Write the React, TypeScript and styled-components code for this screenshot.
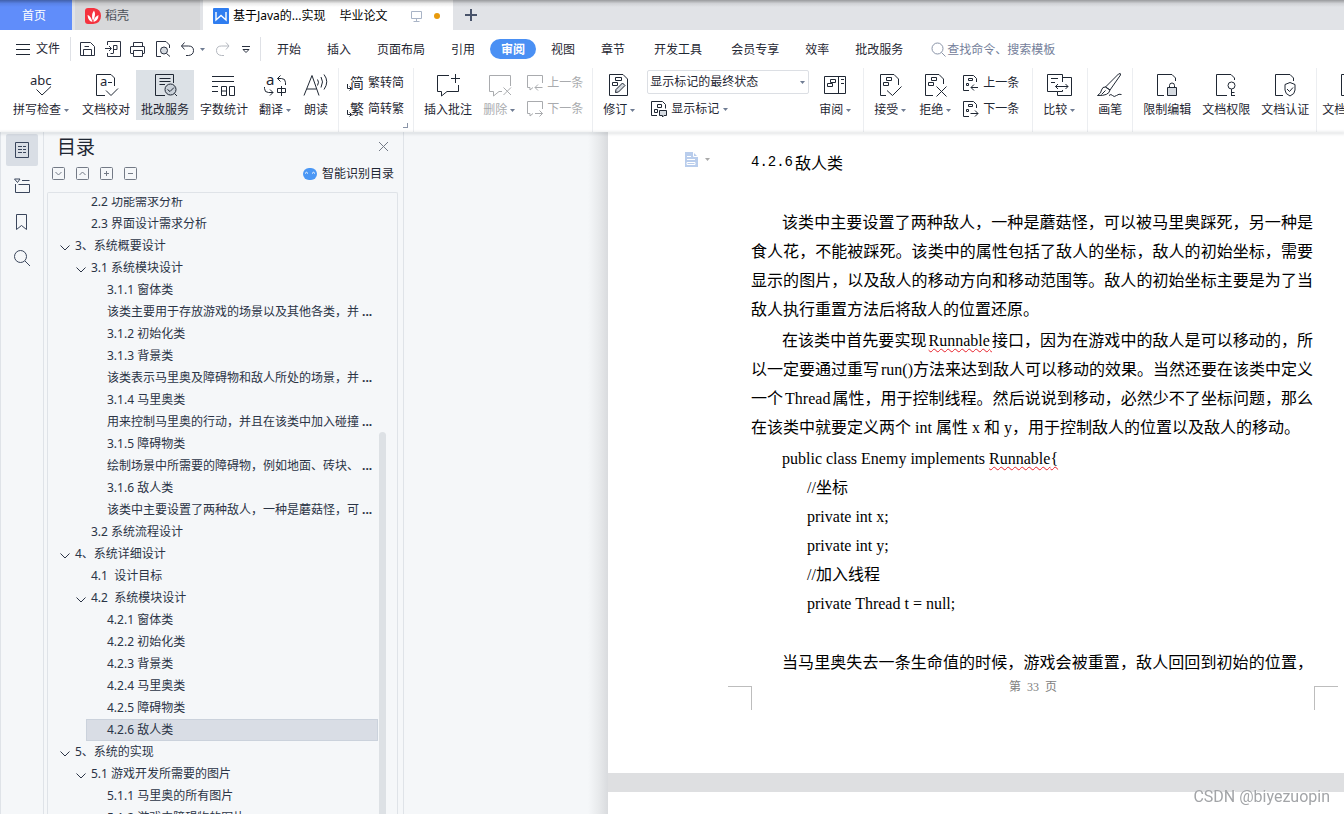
import React from "react";
import styled, { createGlobalStyle } from "styled-components";

const uiFont = `"Noto Sans", "Noto Sans CJK SC", sans-serif`;
const docFont = `"Liberation Serif", "Noto Sans CJK SC", serif`;

const GlobalStyle = createGlobalStyle`
  * { box-sizing: border-box; }
  body { margin: 0; overflow: hidden; font: 12px/18px ${uiFont}; color: #1f2733; background: #fff; }
  button, input, select { font: inherit; color: inherit; border: 0; background: none; padding: 0; margin: 0; }
  ul { list-style: none; margin: 0; padding: 0; }
  h1, h2, p { margin: 0; font-weight: 400; }
`;

const Shell = styled.div`
  display: flex;
  flex-direction: column;
  height: 100vh;
`;

/* ---------- window tabs ---------- */
const TabBar = styled.nav`
  position: relative;
  display: flex;
  height: 30px;
  flex: none;
  background: #e1e3e7;
  &::after {
    content: "";
    position: absolute;
    inset: 0 0 auto 0;
    height: 7px;
    background: linear-gradient(rgba(0, 0, 0, 0.32), rgba(0, 0, 0, 0.08) 50%, transparent);
    pointer-events: none;
  }
`;
const HomeTab = styled.button`
  width: 72px;
  margin-right: 3px;
  padding: 2px 4px 0 0;
  background: #608dfa;
  color: #fff;
`;
const FileTab = styled.button<{ $active?: boolean }>`
  display: flex;
  align-items: center;
  gap: 4px;
  width: ${(p) => (p.$active ? 250 : 128)}px;
  padding: 2px 0 0 10px;
  background: ${(p) => (p.$active ? "#fff" : "#d7d8da")};
  border-right: ${(p) => (p.$active ? 0 : 3)}px solid #e1e3e7;
  color: ${(p) => (p.$active ? "#000" : "#4b5058")};
  white-space: pre;
`;
const TabTitle = styled.span`
  display: flex;
  gap: 14px;
  margin-right: 18px;
`;
const UnsavedDot = styled.i`
  width: 6px;
  height: 6px;
  margin-left: 7px;
  border-radius: 3px;
  background: #e89a0c;
`;
const NewTab = styled.button`
  display: grid;
  place-items: center;
  width: 36px;
  color: #48536a;
`;

/* ---------- menu row ---------- */
const MenuRow = styled.div`
  display: flex;
  align-items: center;
  height: 38px;
  flex: none;
  padding: 0 0 0 16px;
`;
const FileButton = styled.button`
  display: flex;
  align-items: center;
  gap: 6px;
  width: 54px;
`;
const Rule = styled.i`
  width: 1px;
  height: 24px;
  background: #dfe1e6;
`;
const QuickBar = styled.div`
  display: flex;
  align-items: center;
  gap: 9px;
  width: 189px;
  padding-left: 9px;
`;
const QuickButton = styled.button<{ $dim?: boolean }>`
  display: flex;
  align-items: center;
  gap: 4px;
  color: ${(p) => (p.$dim ? "#b4b8bf" : "#2a3140")};
`;
const MenuTabs = styled.div`
  display: flex;
  gap: 4px;
  padding-left: 5px;
`;
const MenuTab = styled.button<{ $active?: boolean; $spaced?: boolean }>`
  height: 20px;
  padding: 2px 11px 0;
  margin-left: ${(p) => (p.$spaced ? 3 : 0)}px;
  border-radius: 10px;
  line-height: 18px;
  white-space: nowrap;
  background: ${(p) => (p.$active ? "#4a90f4" : "none")};
  color: ${(p) => (p.$active ? "#fff" : "#1f2733")};
  font-weight: ${(p) => (p.$active ? 700 : 400)};
`;
const Search = styled.label`
  display: flex;
  align-items: center;
  gap: 1px;
  margin-left: 17px;
  color: #8a94a8;
  input {
    width: 130px;
    height: 20px;
    outline: 0;
  }
  input::placeholder {
    color: #74809a;
    opacity: 1;
  }
`;

/* ---------- ribbon ---------- */
const Ribbon = styled.div`
  display: flex;
  height: 64px;
  flex: none;
  padding-left: 3px;
  overflow: hidden;
  background: #fff;
`;
const RibbonShade = styled.div`
  height: 0;
  flex: none;
  z-index: 2;
  box-shadow: 0 1px 3px 1px rgba(60, 70, 85, 0.18);
`;
const Group = styled.div<{ $tight?: boolean }>`
  position: relative;
  display: flex;
  flex: none;
  gap: 1px;
  padding: 2px ${(p) => (p.$tight ? 2 : 5)}px 0 5px;
  border-right: 1px solid #eceef1;
`;
const TrailingGroup = styled.div`
  display: flex;
  flex: none;
  padding-top: 2px;
`;
const Tool = styled.button<{ $active?: boolean; $off?: boolean }>`
  display: flex;
  flex-direction: column;
  align-items: center;
  height: 50px;
  padding: 3px 5px 0;
  gap: 4px;
  background: ${(p) => (p.$active ? "#dce1e6" : "none")};
  color: ${(p) => (p.$off ? "#a9abae" : "#1f2733")};
  white-space: nowrap;
`;
const ToolLabel = styled.span`
  display: flex;
  align-items: center;
  gap: 3px;
`;
const CaretSlot = styled.span`
  display: flex;
  width: 7px;
  color: #6f7c93;
`;
const Stack = styled.div<{ $wide?: boolean; $spaced?: boolean }>`
  display: flex;
  flex-direction: column;
  width: ${(p) => (p.$wide ? "166px" : "auto")};
  margin-right: ${(p) => (p.$wide || p.$spaced ? 4 : 0)}px;
  padding-left: ${(p) => (p.$wide ? 4 : 0)}px;
`;
const SmallTool = styled.button<{ $off?: boolean }>`
  display: flex;
  align-items: center;
  gap: 4px;
  height: 26px;
  padding: 0 4px;
  color: ${(p) => (p.$off ? "#a9abae" : "#1f2733")};
  white-space: nowrap;
`;
const SelectBox = styled.label`
  display: grid;
  align-items: center;
  height: 24px;
  margin-bottom: 2px;
  border: 1px solid #dcdfe4;
  border-radius: 2px;
  color: #6f7c93;
  select,
  svg {
    grid-area: 1 / 1;
  }
  svg {
    justify-self: end;
    margin-right: 3px;
    pointer-events: none;
  }
  select {
    width: 100%;
    height: 22px;
    padding-left: 2px;
    appearance: none;
    color: #1f2733;
  }
`;
const Launcher = styled.i`
  position: absolute;
  right: 5px;
  bottom: 4px;
  width: 5px;
  height: 5px;
  border: solid #8a94a8;
  border-width: 0 1px 1px 0;
`;

/* ---------- body ---------- */
const Body = styled.main`
  display: flex;
  flex: 1;
  min-height: 0;
  background: #f5f7f9;
`;
const Rail = styled.nav`
  display: flex;
  flex-direction: column;
  align-items: center;
  gap: 4px;
  width: 44px;
  flex: none;
  padding-top: 2px;
  border: solid #dfe3e8;
  border-width: 0 1px;
`;
const RailButton = styled.button<{ $active?: boolean }>`
  display: grid;
  place-items: center;
  width: 32px;
  height: 32px;
  border-radius: 2px;
  background: ${(p) => (p.$active ? "#d9dee5" : "none")};
  color: #3a465c;
`;
const Panel = styled.aside`
  display: flex;
  flex-direction: column;
  width: 360px;
  flex: none;
  padding: 0 5px 0 3px;
  border-right: 1px solid #dfe3e8;
`;
const PanelHead = styled.header`
  display: flex;
  align-items: center;
  justify-content: space-between;
  height: 29px;
  padding: 0 9px 0 10px;
  h2 {
    font-size: 19px;
    line-height: 28px;
  }
`;
const PanelTools = styled.div`
  display: flex;
  align-items: center;
  gap: 11px;
  height: 25px;
  margin-bottom: 6px;
  padding: 0 4px 0 5px;
`;
const IconButton = styled.button`
  display: flex;
  color: #737a86;
`;
const SmartButton = styled.button`
  display: flex;
  align-items: center;
  gap: 5px;
  margin-left: auto;
  color: #1f2733;
`;
const TocBox = styled.div`
  display: flex;
  flex: 1;
  min-height: 0;
  padding-top: 4px;
  padding-right: 11px;
  border: 1px solid #dfe3e8;
  border-bottom: 0;
  border-radius: 2px 2px 0 0;
`;
const TocClip = styled.div`
  flex: 1;
  min-width: 0;
  overflow: hidden;
`;
const TocList = styled.ul`
  margin: -6px 1px 0 6px;
`;
const TocItem = styled.li<{ $level: number }>`
  display: flex;
  padding-left: ${(p) => (p.$level - 1) * 16}px;
`;
const TocRow = styled.button<{ $active?: boolean }>`
  display: flex;
  flex: 1;
  align-items: center;
  height: 22px;
  padding-left: 5px;
  border: 1px solid ${(p) => (p.$active ? "#cbd2dc" : "transparent")};
  background: ${(p) => (p.$active ? "#d9dde5" : "none")};
  color: #2b3446;
  white-space: pre;
`;
const Fold = styled.span`
  display: flex;
  width: 15px;
  padding-top: 3px;
`;
const More = styled.b`
  margin-left: 3px;
`;
const ScrollTrack = styled.div`
  width: 7px;
  flex: none;
  padding-top: 235px;
`;
const ScrollThumb = styled.div`
  height: 100%;
  border-radius: 4px 4px 0 0;
  background: #dde1e5;
`;

/* ---------- document ---------- */
const Gutter = styled.div`
  width: 204px;
  flex: none;
  background: linear-gradient(to left, #d9dbde, #e9ebed 10px, #f5f7f9 20px);
`;
const Pages = styled.div`
  display: flex;
  flex-direction: column;
  gap: 19px;
  flex: 1;
  min-width: 0;
  background: #dedfe1;
`;
const Page = styled.article`
  padding: 19px 31px 63px 143px;
  background: #fff;
  color: #000;
  font-family: ${docFont};
`;
const NextPage = styled.div`
  flex: 1;
  background: #fff;
`;
const HeadingRow = styled.div`
  display: flex;
  align-items: center;
  height: 22px;
  margin: 0 0 35px -67px;
`;
const ParagraphMenu = styled.button`
  display: flex;
  align-items: center;
  gap: 7px;
  width: 67px;
  padding-bottom: 6px;
  color: #a9a9a9;
`;
const Heading = styled.h1`
  display: flex;
  align-items: center;
  gap: 2px;
  font: 16px/22px "Noto Sans CJK SC", sans-serif;
`;
const HeadingNumber = styled.span`
  font: 14px/22px "Liberation Mono", monospace;
`;
const Para = styled.p<{ $full?: boolean; $gap?: number }>`
  margin-bottom: ${(p) => p.$gap ?? 0}px;
  font-size: 16px;
  line-height: 29px;
  text-indent: 31px;
  text-align: justify;
  text-align-last: ${(p) => (p.$full ? "justify" : "auto")};
`;
/* thin space between Chinese and Latin runs */
const Thin = styled.span`
  font-size: 8px;
  line-height: 0;
`;
const Code = styled.p<{ $level: number }>`
  padding-left: ${(p) => (p.$level ? 56 : 31)}px;
  font-size: 16px;
  line-height: 29px;
`;
const CodeBlock = styled.section`
  margin-bottom: 30px;
`;
const Misspelt = styled.span`
  text-decoration: underline wavy #e8202a 1px;
  text-underline-offset: 2px;
  text-decoration-skip-ink: none;
`;
const PageFoot = styled.footer`
  display: flex;
  justify-content: space-between;
  height: 33px;
  margin: 0 -25px 0 -23px;
  color: #808080;
  font-size: 12px;
  line-height: 20px;
`;
const FootText = styled.span`
  display: flex;
  gap: 6px;
`;
const CropMark = styled.i<{ $right?: boolean }>`
  width: 24px;
  height: 24px;
  margin-top: 9px;
  border: solid #bdbdbd;
  border-width: ${(p) => (p.$right ? "1px 0 0 1px" : "1px 1px 0 0")};
`;
const Watermark = styled.div`
  position: fixed;
  right: 14px;
  bottom: 6px;
  z-index: 3;
  color: #a3a5a8;
  font: 16px/22px Roboto, sans-serif;
  text-shadow: 1px 1px 0 #fff;
  pointer-events: none;
`;

/* ---------- icons ---------- */
type SvgProps = { w?: number; h?: number; sw?: number; children: React.ReactNode };
const Svg = ({ w = 24, h = w, sw = 1, children }: SvgProps) => (
  <svg width={w} height={h} viewBox={`0 0 ${w} ${h}`} fill="none" stroke="currentColor" strokeWidth={sw} aria-hidden="true" overflow="visible">
    {children}
  </svg>
);
const Glyph = ({ x, y, size, children }: { x: number; y: number; size: number; children: string }) => (
  <text x={x} y={y} fontSize={size} fill="currentColor" stroke="none">{children}</text>
);
const Caret = () => (
  <svg width="5" height="3" viewBox="0 0 5 3" fill="currentColor" aria-hidden="true"><path d="M0 0H5L2.5 3Z" /></svg>
);
const P = ({ d, fill }: { d: string; fill?: string }) => <path d={d} fill={fill} />;

const icons = {
  spell: <Svg><Glyph x={0} y={12} size={13}>abc</Glyph><P d="M6.5 16.5L12 22L21 13.5" /></Svg>,
  proof: <Svg><P d="M11 22.5H2.5V1.5H17L20.5 5V13M12 17.5L17 22.5L24 15.5M14 9.5H18" /><Glyph x={6} y={13} size={13}>a</Glyph></Svg>,
  correct: <Svg><P d="M12 22.5H2.5V1.5H20.5V10M6.5 5.5H17.5M6.5 8.5H17.5M6.5 11.5H12" /><circle cx="17.5" cy="16.5" r="5.5" fill="#c9d0d8" /><P d="M21.5 20.5L24 23M14.5 16.5L17 18.5L21 14.5" /></Svg>,
  count: <Svg><P d="M0 3.5H22M0 8.5H22M0 13.5H6M0 18.5H6M9.5 13.5H14.5V22.5H9.5ZM9.5 18H14.5M17.5 13.5H22.5V22.5H17.5Z" /></Svg>,
  translate: <Svg><Glyph x={2} y={12} size={15}>a</Glyph><P d="M21.5 12V9.5Q21.5 5.5 17.5 5.5H13.5M16.5 2.5L13.5 5.5L16.5 8.5M.5 14V15.5Q.5 19.5 4.5 19.5H9M6 16.5L9 19.5L6 22.5M13.5 15.5H21.5V19.5H13.5ZM17.5 13V23" /></Svg>,
  read: <Svg><P d="M0 22.5L8 2.5L15 22.5M3 16H12.5M13.5 6.5Q15.5 9 13.5 12.5M17 4Q20 8.5 17 14.5M20 1.5Q25.5 8.5 20 16.5" /></Svg>,
  simplify: <Svg w={16}><Glyph x={2} y={13} size={14}>简</Glyph><P d="M-.5 9V13.5H3M1.5 11.5L3.5 13.5L1.5 15.5" /></Svg>,
  traditional: <Svg w={16}><Glyph x={2} y={13} size={14}>繁</Glyph><P d="M-.5 9V13.5H3M1.5 11.5L3.5 13.5L1.5 15.5" /></Svg>,
  addNote: <Svg><P d="M13 2.5H1.5V18.5H5.5V23L11 18.5H22.5V12M19.5 1V10M15 5.5H24" /></Svg>,
  delNote: <Svg><P d="M14 18.5H11L5.5 23V18.5H1.5V2.5H22.5V13M15.5 14.5L23 22M23 14.5L15.5 22" /></Svg>,
  prevNote: <Svg w={16}><P d="M6 12.5L3 15V12.5H.5V.5H15.5V8M15.5 12.5H8M11 9.5L8 12.5L11 15.5" /></Svg>,
  nextNote: <Svg w={16}><P d="M6 12.5L3 15V12.5H.5V.5H15.5V8M8 12.5H15.5M12.5 9.5L15.5 12.5L12.5 15.5" /></Svg>,
  revise: <Svg><P d="M1.5 1.5H15L19.5 6V22.5H1.5ZM7.5 4.5H13.5V7.5H7.5ZM4.5 9.5H9.5V12.5H4.5Z" /><P fill="#d5dae0" d="M7.5 19.5L8 16.5L14.5 10L17 12.5L10.5 19Z" /></Svg>,
  markup: <Svg w={16}><P d="M6 14.5H.5V.5H11.5L14.5 3.5V7.5M6.5 3.5H10.5V6.5H6.5ZM3.5 8.5H6.5V11.5H3.5Z" /><P fill="#d5dae0" d="M8.5 9.5H15.5V14.5H13L11.5 16V14.5H8.5Z" /></Svg>,
  reviewPane: <Svg><P d="M.5 3.5H21.5V20.5H.5ZM14.5 3.5V20.5M17 6.5H20M17 10.5H20M6.5 6.5H11.5V9.5H6.5ZM3.5 10.5H8.5V13.5H3.5Z" /></Svg>,
  accept: <Svg><P d="M7 22.5H1.5V1.5H15L19.5 6V12M8 17.5L13.5 22.5L22.5 13.5M7.5 4.5H12.5V7.5H7.5ZM4.5 9.5H9.5V12.5H4.5Z" /></Svg>,
  reject: <Svg><P d="M9 22.5H1.5V1.5H15L19.5 6V11M12.5 13.5L22.5 23.5M22.5 13.5L12.5 23.5M7.5 4.5H12.5V7.5H7.5ZM4.5 9.5H9.5V12.5H4.5Z" /></Svg>,
  prevChange: <Svg w={16}><P d="M6 15.5H.5V.5H10.5L13.5 3.5V7M15 12.5H8M11 9.5L8 12.5L11 15.5M5.5 3.5H9.5V5.5H5.5ZM3.5 8.5H5.5V10.5H3.5Z" /></Svg>,
  nextChange: <Svg w={16}><P d="M6 15.5H.5V.5H10.5L13.5 3.5V7M7.5 12.5H15M12 9.5L15 12.5L12 15.5M5.5 3.5H9.5V5.5H5.5ZM3.5 8.5H5.5V10.5H3.5Z" /></Svg>,
  compare: <Svg><P d="M14.5 9V1.5H-.5V18.5H9.5V22.5H23.5V4.5H14.5M9.5 18.5H14.5V17M3 5.5H10M3 9.5H7M7.5 13.5H20M10 11L7.5 13.5L10 16M17.5 11L20 13.5L17.5 16" /></Svg>,
  brush: <Svg><P d="M7.5 14L20.5 1Q23 -.5 22.5 2L12 17ZM7.5 14L12 17Q11 23 -.5 22.5Q3.5 20 3.5 17Q4.5 13.5 7.5 14M3.5 21.5L7.5 17.5M11 22.5Q13 20.5 14.5 22.5T18.5 22.5T23.5 21.5" /></Svg>,
  lock: <Svg><P d="M9 22.5H2.5V1.5H17L20.5 5V8M14.5 14.5V12.5Q14.5 10 17 10T19.5 12.5V14.5" /><P fill="#d5dae0" d="M12.5 14.5H21.5V22.5H12.5Z" /></Svg>,
  key: <Svg><P d="M13 22.5H2.5V1.5H17L20.5 5V7M17.5 16V23M17.5 19.5H20.5M17.5 22.5H21" /><circle cx="17.5" cy="12.5" r="3.5" /></Svg>,
  shield: <Svg><P d="M10 22.5H2.5V1.5H17L20.5 5V8M17 9.5L22 11.5V17Q22 21 17 23Q12 21 12 17V11.5ZM14 16L16.5 18.5L20 14.5" /></Svg>,
  docPlain: <Svg><P d="M14 22.5H7.5V1.5H20" /></Svg>,
};

const TocFold = () => <Svg w={10} h={6}><P d="M.5 .5L5 5L9.5 .5" /></Svg>;
const BoxIcon = ({ d }: { d: string }) => (
  <Svg w={13}><rect x=".5" y=".5" width="12" height="12" rx="1" /><P d={d} /></Svg>
);

/* ---------- parts ---------- */
type ToolProps = { icon: keyof typeof icons; label: string; caret?: boolean; active?: boolean; off?: boolean };
const BigTool = ({ icon, label, caret, active, off }: ToolProps) => (
  <Tool $active={active} $off={off} disabled={off}>
    {icons[icon]}
    <ToolLabel>{label}{caret && <CaretSlot><Caret /></CaretSlot>}</ToolLabel>
  </Tool>
);
const LineTool = ({ icon, label, caret, off }: ToolProps) => (
  <SmallTool $off={off} disabled={off}>
    {icons[icon]}
    {label}
    {caret && <CaretSlot><Caret /></CaretSlot>}
  </SmallTool>
);

type Entry = { level: number; text: string; fold?: boolean; cut?: boolean; active?: boolean };
const toc: Entry[] = [
  { level: 2, text: "2.2 功能需求分析" },
  { level: 2, text: "2.3 界面设计需求分析" },
  { level: 1, text: "3、系统概要设计", fold: true },
  { level: 2, text: "3.1 系统模块设计", fold: true },
  { level: 3, text: "3.1.1 窗体类" },
  { level: 3, text: "该类主要用于存放游戏的场景以及其他各类，并", cut: true },
  { level: 3, text: "3.1.2 初始化类" },
  { level: 3, text: "3.1.3 背景类" },
  { level: 3, text: "该类表示马里奥及障碍物和敌人所处的场景，并", cut: true },
  { level: 3, text: "3.1.4 马里奥类" },
  { level: 3, text: "用来控制马里奥的行动，并且在该类中加入碰撞", cut: true },
  { level: 3, text: "3.1.5 障碍物类" },
  { level: 3, text: "绘制场景中所需要的障碍物，例如地面、砖块、", cut: true },
  { level: 3, text: "3.1.6 敌人类" },
  { level: 3, text: "该类中主要设置了两种敌人，一种是蘑菇怪，可", cut: true },
  { level: 2, text: "3.2 系统流程设计" },
  { level: 1, text: "4、系统详细设计", fold: true },
  { level: 2, text: "4.1  设计目标" },
  { level: 2, text: "4.2  系统模块设计", fold: true },
  { level: 3, text: "4.2.1 窗体类" },
  { level: 3, text: "4.2.2 初始化类" },
  { level: 3, text: "4.2.3 背景类" },
  { level: 3, text: "4.2.4 马里奥类" },
  { level: 3, text: "4.2.5 障碍物类" },
  { level: 3, text: "4.2.6 敌人类", active: true },
  { level: 1, text: "5、系统的实现", fold: true },
  { level: 2, text: "5.1 游戏开发所需要的图片", fold: true },
  { level: 3, text: "5.1.1 马里奥的所有图片" },
  { level: 3, text: "5.1.2 游戏中障碍物的图片" },
];

const menu = ["开始", "插入", "页面布局", "引用", "审阅", "视图", "章节", "开发工具", "会员专享", "效率", "批改服务"];

export default function App() {
  return (
    <Shell>
      <GlobalStyle />
      <TabBar>
        <HomeTab>首页</HomeTab>
        <FileTab>
          <svg width="16" height="16" viewBox="0 0 16 16" aria-hidden="true">
            <path d="M3 0H9Q16 1 16 8T8 16H3Q0 16 0 13V3Q0 0 3 0Z" fill="#f5333f" />
            <path d="M7.5 14Q3 13 2.5 7Q6 8 7.5 14ZM8 13Q5.5 7 9 2.5Q11.5 7 8 13ZM8.5 14Q9 9 13.5 7Q13.5 12.5 8.5 14Z" fill="#fff" />
          </svg>
          稻壳
        </FileTab>
        <FileTab $active>
          <svg width="16" height="16" viewBox="0 0 16 16" aria-hidden="true">
            <rect width="16" height="16" rx="1" fill="#2f7df0" />
            <path d="M3 4V12L8 7.5L13 12V4" stroke="#fff" strokeWidth="1.4" fill="none" />
          </svg>
          <TabTitle><span>基于Java的...实现</span><span>毕业论文</span></TabTitle>
          <Svg w={13} h={12}><g stroke="#a9b4c6"><P d="M1.5 1.5H11.5V8.5H1.5ZM6.5 8.5V11.5M3.5 11.5H9.5" /></g></Svg>
          <UnsavedDot />
        </FileTab>
        <NewTab aria-label="新建标签"><Svg w={12} sw={2}><P d="M6 0V12M0 6H12" /></Svg></NewTab>
      </TabBar>

      <MenuRow>
        <FileButton><Svg w={14} h={11}><P d="M0 .5H14M0 5.5H14M0 10.5H14" /></Svg>文件</FileButton>
        <Rule />
        <QuickBar>
          <QuickButton aria-label="保存"><Svg w={16}><P d="M.5 14.5V1.5H10.5L14.5 5.5V14.5ZM3.5 14V8.5H11.5V14M4.5 5.5H9" /></Svg></QuickButton>
          <QuickButton aria-label="输出为PDF"><Svg w={16}><P d="M2.5 4V.5H15.5V15.5H2.5V12M0 7.5H6M4 5L6.5 7.5L4 10M8.5 12V4.5H12V8.5H8.5M5.5 12.5H8.5" /></Svg></QuickButton>
          <QuickButton aria-label="打印"><Svg w={16}><P d="M3.5 5V1.5H12.5V5M3.5 12.5H1Q.5 12.5 .5 12V6Q.5 5.5 1 5.5H14Q14.5 5.5 14.5 6V12Q14.5 12.5 14 12.5H12.5M3.5 9.5H12.5V15.5H3.5Z" /></Svg></QuickButton>
          <QuickButton aria-label="打印预览"><Svg w={16}><P d="M6 15.5H1.5V.5H11L14.5 4V7M11.5 12.5L15 15.5" /><circle cx="9" cy="9.5" r="3.5" fill="#d5dae0" /></Svg></QuickButton>
          <QuickButton aria-label="撤销"><Svg w={16}><P d="M4.5 1.5L1.5 5L4.5 8.5M1.5 5H8.5Q13.5 5 13.5 9.5T8.5 14.5H6" /></Svg><CaretSlot><Caret /></CaretSlot></QuickButton>
          <QuickButton $dim aria-label="恢复"><Svg w={14} h={16}><P d="M10 1.5L13 5L10 8.5M13 5H5.5Q.5 5 .5 9.5T5.5 14.5H8" /></Svg></QuickButton>
          <QuickButton aria-label="自定义快速访问"><Svg w={13} h={9}><P d="M3 1.5H11M4 4.5L7 7.5L10 4.5Z" /></Svg></QuickButton>
        </QuickBar>
        <Rule />
        <MenuTabs>
          {menu.map((m) => (
            <MenuTab key={m} $active={m === "审阅"} $spaced={m === "开发工具" || m === "会员专享"}>{m}</MenuTab>
          ))}
        </MenuTabs>
        <Search>
          <Svg w={15}><circle cx="6.5" cy="6.5" r="5.5" /><P d="M10.5 10.5L14.5 14.5" /></Svg>
          <input aria-label="搜索" placeholder="查找命令、搜索模板" />
        </Search>
      </MenuRow>

      <Ribbon>
        <Group>
          <BigTool icon="spell" label="拼写检查" caret />
          <BigTool icon="proof" label="文档校对" />
          <BigTool icon="correct" label="批改服务" active />
          <BigTool icon="count" label="字数统计" />
          <BigTool icon="translate" label="翻译" caret />
          <BigTool icon="read" label="朗读" />
        </Group>
        <Group>
          <Stack>
            <LineTool icon="simplify" label="繁转简" />
            <LineTool icon="traditional" label="简转繁" />
          </Stack>
          <Launcher />
        </Group>
        <Group>
          <BigTool icon="addNote" label="插入批注" />
          <BigTool icon="delNote" label="删除" caret off />
          <Stack>
            <LineTool icon="prevNote" label="上一条" off />
            <LineTool icon="nextNote" label="下一条" off />
          </Stack>
        </Group>
        <Group>
          <BigTool icon="revise" label="修订" caret />
          <Stack $wide>
            <SelectBox>
              <select aria-label="显示状态"><option>显示标记的最终状态</option></select>
              <Caret />
            </SelectBox>
            <LineTool icon="markup" label="显示标记" caret />
          </Stack>
          <BigTool icon="reviewPane" label="审阅" caret />
        </Group>
        <Group>
          <BigTool icon="accept" label="接受" caret />
          <BigTool icon="reject" label="拒绝" caret />
          <Stack $spaced>
            <LineTool icon="prevChange" label="上一条" />
            <LineTool icon="nextChange" label="下一条" />
          </Stack>
        </Group>
        <Group><BigTool icon="compare" label="比较" caret /></Group>
        <Group><BigTool icon="brush" label="画笔" /></Group>
        <Group $tight>
          <BigTool icon="lock" label="限制编辑" />
          <BigTool icon="key" label="文档权限" />
          <BigTool icon="shield" label="文档认证" />
        </Group>
        <TrailingGroup><BigTool icon="docPlain" label="文档定稿" /></TrailingGroup>
      </Ribbon>
      <RibbonShade />

      <Body>
        <Rail>
          <RailButton $active aria-label="目录"><Svg w={16}><P d="M1.5 .5H14.5V15.5H1.5ZM4 4.5H8M9 4.5H12M4 7.5H8M9 7.5H12M4 10.5H8M9 10.5H12" /></Svg></RailButton>
          <RailButton aria-label="章节"><Svg w={16}><P d="M.5 1H6L3.5 4.5ZM8 2.5H15.5M1.5 6V14.5H15.5V6.5H4.5" /></Svg></RailButton>
          <RailButton aria-label="书签"><Svg w={16}><P d="M2.5 .5H12.5V15.5L7.5 11.5L2.5 15.5Z" /></Svg></RailButton>
          <RailButton aria-label="查找"><Svg w={16}><circle cx="6.5" cy="6.5" r="6" /><P d="M11 11L16 16" /></Svg></RailButton>
        </Rail>
        <Panel>
          <PanelHead>
            <h2>目录</h2>
            <IconButton aria-label="关闭"><Svg w={11}><P d="M1 1L10 10M10 1L1 10" /></Svg></IconButton>
          </PanelHead>
          <PanelTools>
            <IconButton aria-label="展开"><BoxIcon d="M3.5 5L6.5 8L9.5 5" /></IconButton>
            <IconButton aria-label="收起"><BoxIcon d="M3.5 8L6.5 5L9.5 8" /></IconButton>
            <IconButton aria-label="提升级别"><BoxIcon d="M4 6.5H9M6.5 4V9" /></IconButton>
            <IconButton aria-label="降低级别"><BoxIcon d="M4 6.5H9" /></IconButton>
            <SmartButton>
              <svg width="14" height="12" viewBox="0 0 14 12" aria-hidden="true">
                <rect width="14" height="12" rx="6" fill="#4a97f5" />
                <path d="M2 5.5Q3.5 3 5 5.5M9 5.5Q10.5 3 12 5.5" stroke="#fff" fill="none" />
              </svg>
              智能识别目录
            </SmartButton>
          </PanelTools>
          <TocBox>
            <TocClip>
              <TocList>
                {toc.map((t, i) => (
                  <TocItem key={i} $level={t.level}>
                    <TocRow $active={t.active}>
                      <Fold>{t.fold && <TocFold />}</Fold>
                      {t.text}
                      {t.cut && <More>...</More>}
                    </TocRow>
                  </TocItem>
                ))}
              </TocList>
            </TocClip>
            <ScrollTrack><ScrollThumb /></ScrollTrack>
          </TocBox>
        </Panel>
        <Gutter />
        <Pages>
          <Page>
            <HeadingRow>
              <ParagraphMenu aria-label="段落布局">
                <svg width="14" height="15" viewBox="0 0 14 15" aria-hidden="true">
                  <path d="M1 0H9L14 5V15H1Z" fill="#b9cdec" />
                  <path d="M3 4.5H7M3 7.5H11M3 10.5H11V12.5H3ZM9.5 0V4.5H14" stroke="#fff" fill="none" />
                </svg>
                <Caret />
              </ParagraphMenu>
              <Heading><HeadingNumber>4.2.6</HeadingNumber>敌人类</Heading>
            </HeadingRow>
            <Para $gap={2}>
              该类中主要设置了两种敌人，一种是蘑菇怪，可以被马里奥踩死，另一种是食人花，不能被踩死。该类中的属性包括了敌人的坐标，敌人的初始坐标，需要显示的图片，以及敌人的移动方向和移动范围等。敌人的初始坐标主要是为了当敌人执行重置方法后将敌人的位置还原。
            </Para>
            <Para $gap={2}>
              在该类中首先要实现<Thin> </Thin><Misspelt>Runnable<Thin> </Thin></Misspelt>接口，因为在游戏中的敌人是可以移动的，所以一定要通过重写<Thin> </Thin>run()方法来达到敌人可以移动的效果。当然还要在该类中定义一个<Thin> </Thin>Thread<Thin> </Thin>属性，用于控制线程。然后说说到移动，必然少不了坐标问题，那么在该类中就要定义两个 int 属性 x 和 y，用于控制敌人的位置以及敌人的移动。
            </Para>
            <CodeBlock>
              <Code $level={0}>public class Enemy implements <Misspelt>Runnable{"{"}</Misspelt></Code>
              <Code $level={1}>//坐标</Code>
              <Code $level={1}>private int x;</Code>
              <Code $level={1}>private int y;</Code>
              <Code $level={1}>//加入线程</Code>
              <Code $level={1}>private Thread t = null;</Code>
            </CodeBlock>
            <Para $full>当马里奥失去一条生命值的时候，游戏会被重置，敌人回回到初始的位置，</Para>
            <PageFoot>
              <CropMark />
              <FootText><span>第</span><span>33</span><span>页</span></FootText>
              <CropMark $right />
            </PageFoot>
          </Page>
          <NextPage />
        </Pages>
      </Body>
      <Watermark>CSDN @biyezuopin</Watermark>
    </Shell>
  );
}
